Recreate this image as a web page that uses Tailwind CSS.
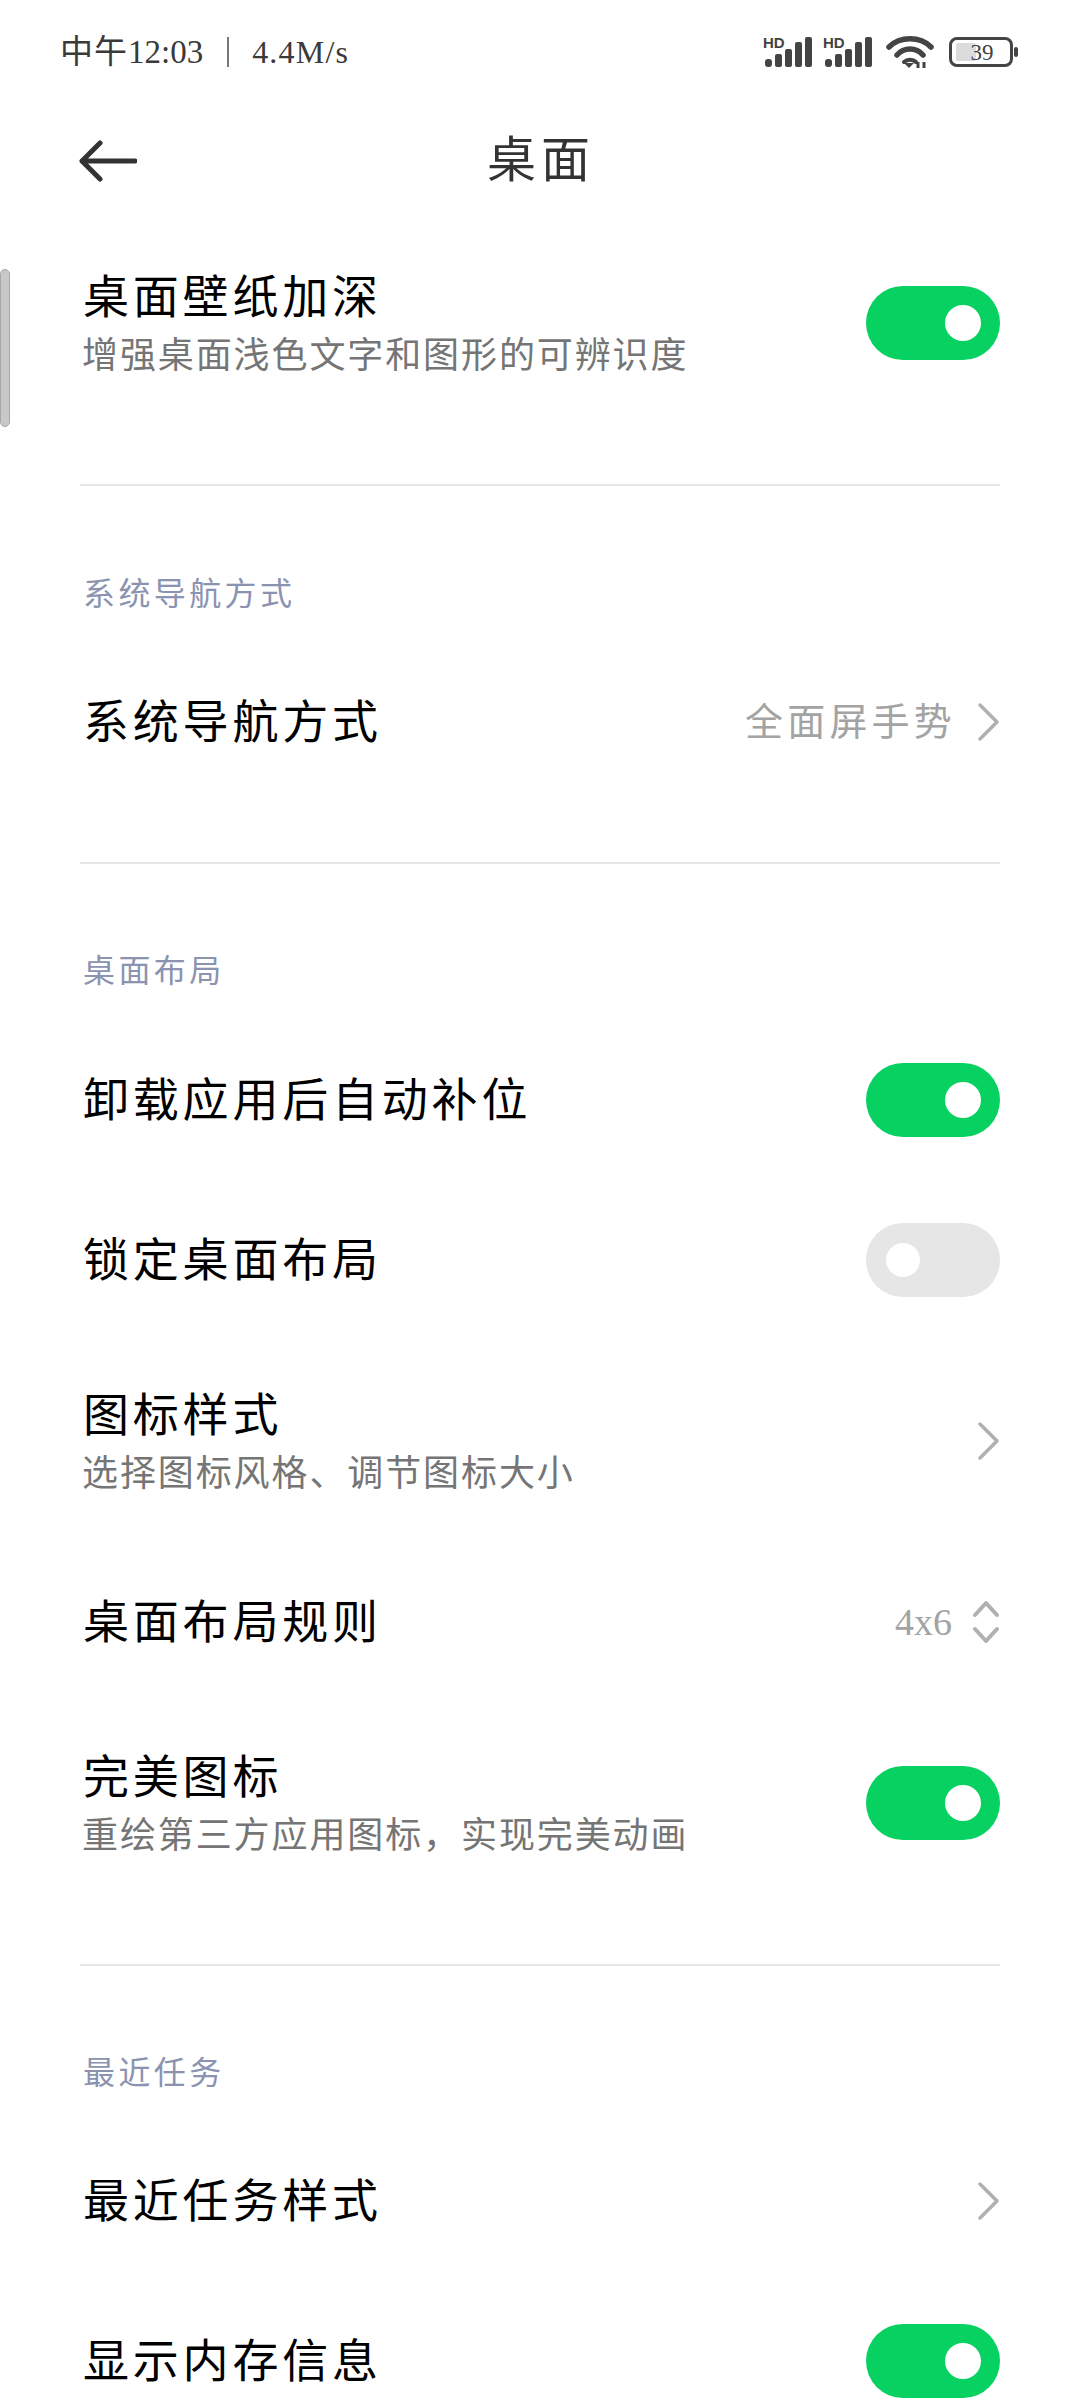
<!DOCTYPE html>
<html lang="zh-CN">
<head>
  <meta charset="UTF-8" />
  <meta name="viewport" content="width=device-width, initial-scale=1.0"/>
  <title>桌面</title>
  <script src="https://cdn.jsdelivr.net/npm/@tailwindcss/browser@4"></script>
</head>
<body class="relative w-[1080px] h-[2400px] overflow-hidden bg-white font-['Liberation_Serif','Noto_Sans_CJK_SC',serif] text-black">

  <!-- scrollbar -->
  <div class="absolute left-0 top-[269px] w-[10px] h-[158px] rounded-[5px] bg-[#c8c8c8] border border-[#a8a8a8]"></div>

  <!-- status bar -->
  <div class="h-[80px] pl-[60px] pr-[62px] pt-[24px] flex items-center justify-between text-[#3a3a3a]">
    <div class="flex items-center leading-none">
      <span class="text-[33px] tracking-[1px]">中午</span>
      <span class="text-[33px]">12:03</span>
      <span class="w-[2px] h-[30px] bg-[#777] ml-[24px] mr-[23px]"></span>
      <span class="text-[32px] tracking-[1.2px]">4.4M/s</span>
    </div>
    <div class="flex items-center">
      <svg class="overflow-visible" width="50" height="32" viewBox="0 0 50 32" fill="#444">
        <text x="0" y="12" font-family="Liberation Sans" font-weight="700" font-size="15">HD</text>
        <rect x="2" y="23" width="7" height="8" rx="3"/><rect x="12" y="18" width="7" height="13" rx="2"/><rect x="22" y="13" width="7" height="18" rx="2"/><rect x="32" y="6" width="7" height="25" rx="2"/><rect x="42" y="1" width="7" height="30" rx="2"/>
      </svg>
      <svg class="ml-[10px] overflow-visible" width="50" height="32" viewBox="0 0 50 32" fill="#444">
        <text x="0" y="12" font-family="Liberation Sans" font-weight="700" font-size="15">HD</text>
        <rect x="2" y="23" width="7" height="8" rx="3"/><rect x="12" y="18" width="7" height="13" rx="2"/><rect x="22" y="13" width="7" height="18" rx="2"/><rect x="32" y="6" width="7" height="25" rx="2"/><rect x="42" y="1" width="7" height="30" rx="2"/>
      </svg>
      <svg class="ml-[13px]" width="48" height="34" viewBox="0 0 48 34" fill="none" stroke="#444" stroke-width="5.5" stroke-linecap="round">
        <path d="M3 12 C14 1 34 1 45 12"/>
        <path d="M11 20 C18 12 30 12 37 20"/>
        <path d="M18 27 C21 24 27 24 30 27" stroke-width="4"/>
        <path d="M18 28 L23 33 L28 28 Z" fill="#444" stroke="none"/>
        <path d="M32 33 V27 M38 33 V27" stroke-width="3" stroke-linecap="butt"/>
      </svg>
      <div class="ml-[15px] flex items-center">
        <div class="relative w-[64px] h-[30px] rounded-[8px] border-[3px] border-[#444] flex items-center justify-center">
          <div class="absolute left-[4px] top-[3px] bottom-[3px] w-[20px] rounded-[2px] bg-[#dcdcdc]"></div>
          <span class="relative text-[23px] leading-none text-[#444] ml-[2px]">39</span>
        </div>
        <div class="ml-[1px] w-[4px] h-[10px] rounded-[2px] bg-[#444]"></div>
      </div>
    </div>
  </div>

  <!-- nav -->
  <div class="relative h-[160px] flex items-center justify-center">
    <svg class="absolute left-[79px] top-[59px]" width="58" height="44" viewBox="0 0 58 44" fill="none" stroke="#333" stroke-width="5" stroke-linecap="round" stroke-linejoin="round">
      <path d="M3 22 H56 M21 4 L3 22 L21 40"/>
    </svg>
    <h1 class="ml-[2px] text-[49px] leading-none font-normal tracking-[5px] text-[#333]">桌面</h1>
  </div>

  <!-- 桌面壁纸加深 -->
  <div class="h-[166px] pl-[83px] pr-[80px] flex items-center justify-between">
    <div class="flex flex-col pt-[3px]">
      <span class="text-[46px] leading-[56px] tracking-[3.8px]">桌面壁纸加深</span>
      <span class="mt-[7px] text-[36px] leading-[46px] tracking-[1.9px] text-[#757575] -ml-[1px]">增强桌面浅色文字和图形的可辨识度</span>
    </div>
    <div class="w-[134px] h-[74px] rounded-full bg-[#07d160] flex items-center justify-end pr-[19px]"><div class="w-[36px] h-[36px] rounded-full bg-white"></div></div>
  </div>

  <div class="mt-[78px] ml-[80px] mr-[80px] h-[2px] bg-[#e6e6e6]"></div>

  <!-- 系统导航方式 -->
  <div class="mt-[83px] h-[50px] pl-[83px] flex items-center text-[32px] tracking-[3.4px] text-[#8b93b0]">系统导航方式</div>
  <div class="mt-[23px] h-[160px] pl-[83px] pr-[80px] flex items-center justify-between">
    <span class="text-[46px] tracking-[3.8px]">系统导航方式</span>
    <div class="flex items-center">
      <span class="text-[38px] tracking-[4.2px] text-[#a3a3a3]">全面屏手势</span>
      <svg class="ml-[20px]" width="24" height="40" viewBox="0 0 24 40" fill="none" stroke="#b0b0b0" stroke-width="3.5" stroke-linecap="round" stroke-linejoin="round"><path d="M4 3 L21 20 L4 37"/></svg>
    </div>
  </div>

  <div class="mt-[60px] ml-[80px] mr-[80px] h-[2px] bg-[#e6e6e6]"></div>

  <!-- 桌面布局 -->
  <div class="mt-[82px] h-[50px] pl-[83px] flex items-center text-[32px] tracking-[3.4px] text-[#8b93b0]">桌面布局</div>
  <div class="mt-[24px] h-[160px] pl-[83px] pr-[80px] flex items-center justify-between">
    <span class="text-[46px] tracking-[3.8px]">卸载应用后自动补位</span>
    <div class="w-[134px] h-[74px] rounded-full bg-[#07d160] flex items-center justify-end pr-[19px]"><div class="w-[36px] h-[36px] rounded-full bg-white"></div></div>
  </div>
  <div class="h-[160px] pl-[83px] pr-[80px] flex items-center justify-between">
    <span class="text-[46px] tracking-[3.8px]">锁定桌面布局</span>
    <div class="w-[134px] h-[74px] rounded-full bg-[#e6e6e6] flex items-center pl-[20px]"><div class="w-[34px] h-[34px] rounded-full bg-white"></div></div>
  </div>
  <div class="h-[202px] pl-[83px] pr-[80px] flex items-center justify-between">
    <div class="flex flex-col pt-[3px]">
      <span class="text-[46px] leading-[56px] tracking-[3.8px]">图标样式</span>
      <span class="mt-[7px] text-[36px] leading-[46px] tracking-[1.9px] text-[#757575] -ml-[1px]">选择图标风格、调节图标大小</span>
    </div>
    <svg width="24" height="40" viewBox="0 0 24 40" fill="none" stroke="#b0b0b0" stroke-width="3.5" stroke-linecap="round" stroke-linejoin="round"><path d="M4 3 L21 20 L4 37"/></svg>
  </div>
  <div class="h-[160px] pl-[83px] pr-[80px] flex items-center justify-between">
    <span class="text-[46px] tracking-[3.8px]">桌面布局规则</span>
    <div class="flex items-center">
      <span class="text-[38px] text-[#a3a3a3]">4x6</span>
      <svg class="ml-[20px]" width="28" height="44" viewBox="0 0 28 44" fill="none" stroke="#b0b0b0" stroke-width="4" stroke-linecap="round" stroke-linejoin="round"><path d="M3 15 L14 3 L25 15 M3 29 L14 41 L25 29"/></svg>
    </div>
  </div>
  <div class="h-[202px] pl-[83px] pr-[80px] flex items-center justify-between">
    <div class="flex flex-col pt-[3px]">
      <span class="text-[46px] leading-[56px] tracking-[3.8px]">完美图标</span>
      <span class="mt-[7px] text-[36px] leading-[46px] tracking-[1.9px] text-[#757575] -ml-[1px]">重绘第三方应用图标，实现完美动画</span>
    </div>
    <div class="w-[134px] h-[74px] rounded-full bg-[#07d160] flex items-center justify-end pr-[19px]"><div class="w-[36px] h-[36px] rounded-full bg-white"></div></div>
  </div>

  <div class="mt-[60px] ml-[80px] mr-[80px] h-[2px] bg-[#e6e6e6]"></div>

  <!-- 最近任务 -->
  <div class="mt-[82px] h-[50px] pl-[83px] flex items-center text-[32px] tracking-[3.4px] text-[#8b93b0]">最近任务</div>
  <div class="mt-[23px] h-[160px] pl-[83px] pr-[80px] flex items-center justify-between">
    <span class="text-[46px] tracking-[3.8px]">最近任务样式</span>
    <svg width="24" height="40" viewBox="0 0 24 40" fill="none" stroke="#b0b0b0" stroke-width="3.5" stroke-linecap="round" stroke-linejoin="round"><path d="M4 3 L21 20 L4 37"/></svg>
  </div>
  <div class="h-[160px] pl-[83px] pr-[80px] flex items-center justify-between">
    <span class="text-[46px] tracking-[3.8px]">显示内存信息</span>
    <div class="w-[134px] h-[74px] rounded-full bg-[#07d160] flex items-center justify-end pr-[19px]"><div class="w-[36px] h-[36px] rounded-full bg-white"></div></div>
  </div>

</body>
</html>
